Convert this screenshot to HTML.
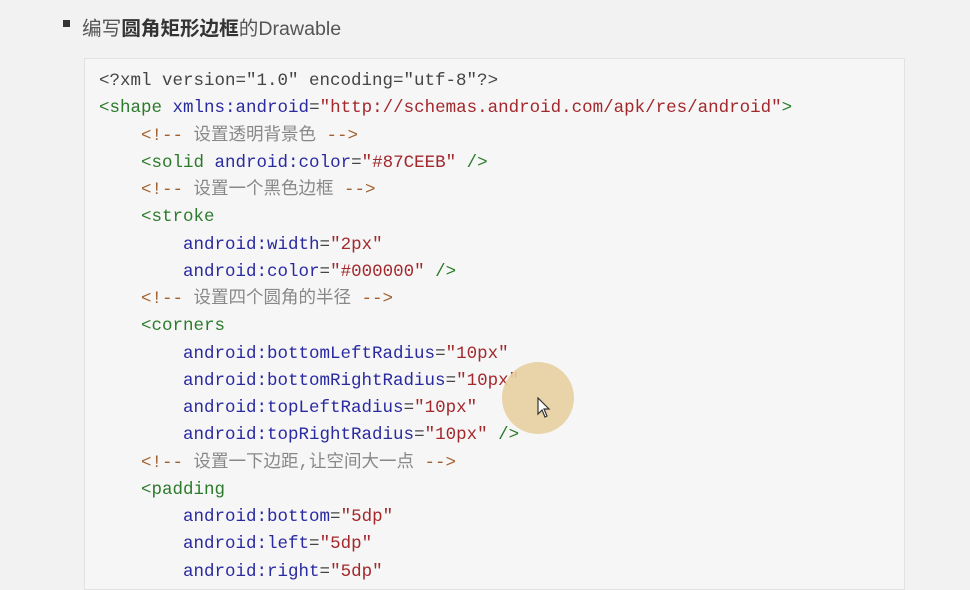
<!DOCTYPE html>
<html><head><meta charset="utf-8"><style>
html,body{margin:0;width:970px;height:570px;overflow:hidden;background:#f2f2f2;}
.h{position:absolute;left:82px;top:12px;font:19.6px "Liberation Sans","Noto Sans CJK SC",sans-serif;color:#555;}
.h b{color:#333}
.bul{position:absolute;left:63px;top:20px;width:7px;height:7px;background:#333;}
.box{position:absolute;left:84px;top:58px;width:819px;height:530px;background:#f6f6f6;border:1px solid #e2e2e2;}
pre{margin:0;position:absolute;left:99px;top:68px;font:17.5px/27.25px "Liberation Mono","Noto Sans CJK SC",monospace;color:#444;}
.t{color:#2b7a2b}.a{color:#2a2aa0}.s{color:#a2282c}.c{color:#a2602e}.cz{color:#888}
.cur{position:absolute;left:502px;top:362px;width:72px;height:72px;border-radius:50%;background:#e8cfa0;opacity:.9}
</style></head><body>
<div class="bul"></div>
<div class="h">编写<b>圆角矩形边框</b>的Drawable</div>
<div class="box"></div>
<pre>&lt;?xml version="1.0" encoding="utf-8"?&gt;
<span class="t">&lt;shape</span> <span class="a">xmlns:android</span>=<span class="s">"http://schemas.android.com/apk/res/android"</span><span class="t">&gt;</span>
    <span class="c">&lt;!-- <span class="cz">设置透明背景色</span> --&gt;</span>
    <span class="t">&lt;solid</span> <span class="a">android:color</span>=<span class="s">"#87CEEB"</span> <span class="t">/&gt;</span>
    <span class="c">&lt;!-- <span class="cz">设置一个黑色边框</span> --&gt;</span>
    <span class="t">&lt;stroke</span>
        <span class="a">android:width</span>=<span class="s">"2px"</span>
        <span class="a">android:color</span>=<span class="s">"#000000"</span> <span class="t">/&gt;</span>
    <span class="c">&lt;!-- <span class="cz">设置四个圆角的半径</span> --&gt;</span>
    <span class="t">&lt;corners</span>
        <span class="a">android:bottomLeftRadius</span>=<span class="s">"10px"</span>
        <span class="a">android:bottomRightRadius</span>=<span class="s">"10px"</span>
        <span class="a">android:topLeftRadius</span>=<span class="s">"10px"</span>
        <span class="a">android:topRightRadius</span>=<span class="s">"10px"</span> <span class="t">/&gt;</span>
    <span class="c">&lt;!-- <span class="cz">设置一下边距,让空间大一点</span> --&gt;</span>
    <span class="t">&lt;padding</span>
        <span class="a">android:bottom</span>=<span class="s">"5dp"</span>
        <span class="a">android:left</span>=<span class="s">"5dp"</span>
        <span class="a">android:right</span>=<span class="s">"5dp"</span></pre>
<div class="cur"></div>
<svg style="position:absolute;left:537px;top:397px" width="14" height="22" viewBox="0 0 14 22"><path d="M1 1 L1 17 L5 13 L8 20 L10 19 L7 12 L12 12 Z" fill="#fff" stroke="#333" stroke-width="1.2"/></svg>
</body></html>
